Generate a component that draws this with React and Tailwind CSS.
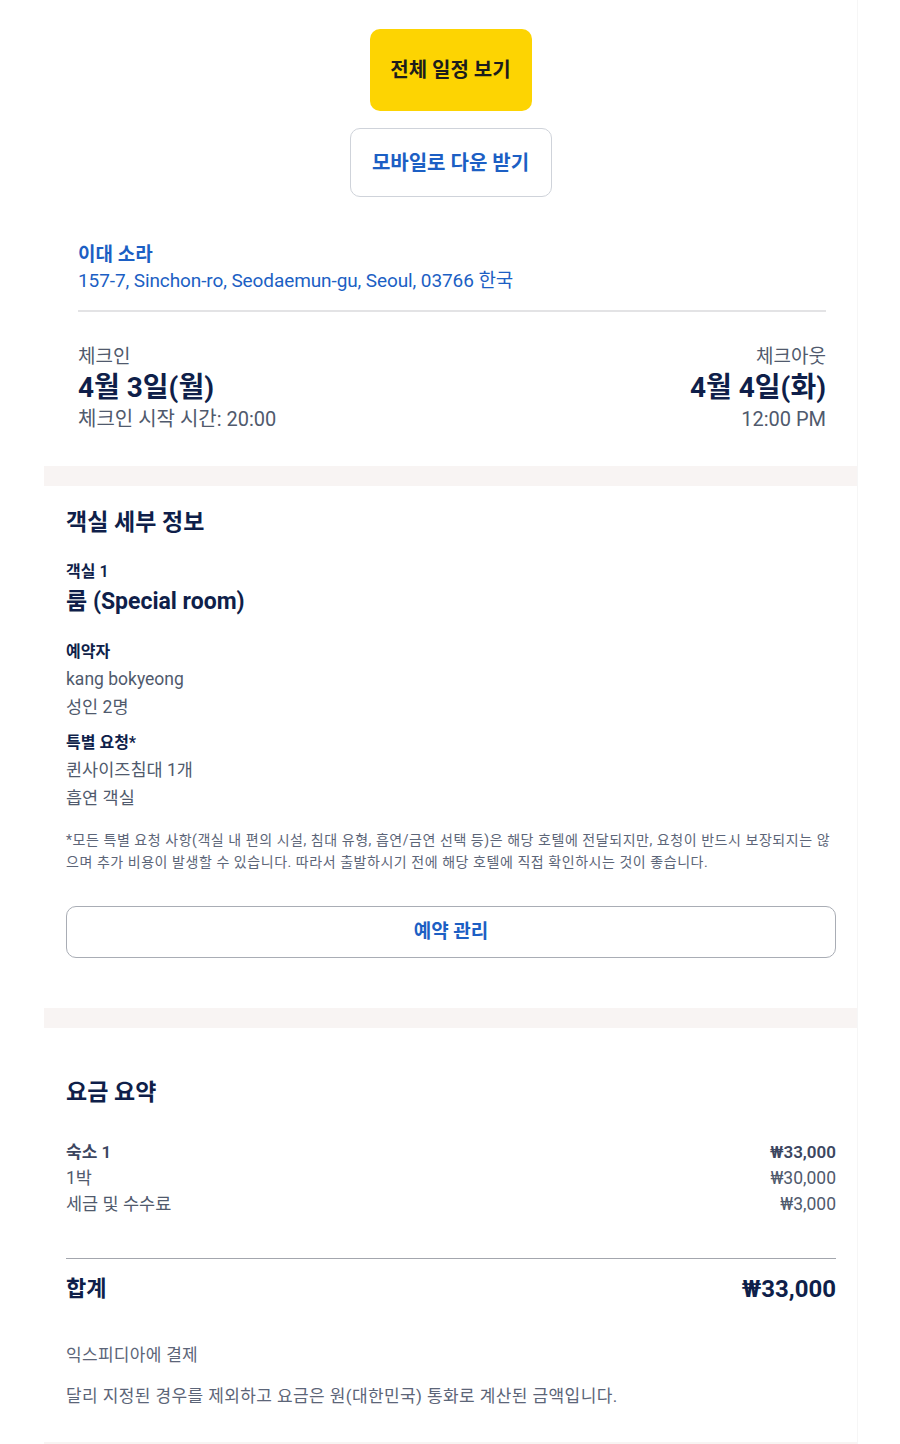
import React from "react";

const font = { fontFamily: 'Roboto, "Noto Sans CJK KR", sans-serif' };

export default function App() {
  return (
    <div className="w-[900px] min-h-[1444px] bg-white" style={font}>
      <div className="mx-[44px] w-[814px] border-r border-[#f6f6f6]">
        {/* Top section */}
        <div className="pt-[29px] pb-[34px]">
          <div className="flex flex-col items-center">
            <button className="w-[162px] h-[82px] rounded-[10px] bg-[#fdd402] text-[20px] font-bold text-[#1c1c1c]">
              전체 일정 보기
            </button>
            <button className="mt-[17px] w-[202px] h-[69px] rounded-[10px] border border-[#cfd3da] bg-white text-[20px] font-semibold text-[#1c5fc4]">
              모바일로 다운 받기
            </button>
          </div>
          <div className="pl-[34px] pr-[31px]">
            <div className="mt-[45px] text-[#1c5fc4]">
              <div className="text-[19px] leading-[26px] font-semibold">이대 소라</div>
              <div className="text-[19px] leading-[26px] tracking-[-0.1px]">157-7, Sinchon-ro, Seodaemun-gu, Seoul, 03766 한국</div>
            </div>
            <div className="mt-[16px] h-[2px] bg-[#e3e3e5]" />
            <div className="mt-[32px] flex justify-between">
              <div>
                <div className="text-[19px] leading-[26px] text-[#505a6d]">체크인</div>
                <div className="text-[28px] leading-[36px] font-bold text-[#0f1f4a]">4월 3일(월)</div>
                <div className="text-[20px] leading-[26px] text-[#505a6d]">체크인 시작 시간: 20:00</div>
              </div>
              <div className="text-right">
                <div className="text-[19px] leading-[26px] text-[#505a6d]">체크아웃</div>
                <div className="text-[28px] leading-[36px] font-bold text-[#0f1f4a]">4월 4일(화)</div>
                <div className="text-[20px] leading-[26px] text-[#505a6d]">12:00 PM</div>
              </div>
            </div>
          </div>
        </div>

        <div className="h-[20px] bg-[#f8f4f3]" />

        {/* Room details */}
        <div className="pl-[22px] pr-[21px] pt-[22px] pb-[50px]">
          <div className="text-[23px] leading-[30px] font-semibold text-[#0f1f4a]">객실 세부 정보</div>
          <div className="mt-[23px] text-[16px] leading-[22px] font-semibold text-[#0f1f4a]">객실 1</div>
          <div className="mt-[4px] text-[23px] leading-[30px] font-bold text-[#0f1f4a]">룸 (Special room)</div>
          <div className="mt-[24px] text-[16px] leading-[22px] font-bold text-[#0f1f4a]">예약자</div>
          <div className="mt-[2px] text-[17.5px] leading-[28px] text-[#505a6d]">kang bokyeong</div>
          <div className="text-[17.5px] leading-[28px] text-[#505a6d]">성인 2명</div>
          <div className="mt-[11px] text-[16px] leading-[22px] font-bold text-[#0f1f4a]">특별 요청*</div>
          <div className="mt-[2px] text-[17.5px] leading-[28px] text-[#505a6d]">퀸사이즈침대 1개</div>
          <div className="text-[17.5px] leading-[28px] text-[#505a6d]">흡연 객실</div>
          <p className="mt-[17px] text-[14px] leading-[22px] tracking-[0.55px] text-[#5c6578]">
            *모든 특별 요청 사항(객실 내 편의 시설, 침대 유형, 흡연/금연 선택 등)은 해당 호텔에 전달되지만, 요청이 반드시 보장되지는 않으며 추가 비용이 발생할 수 있습니다. 따라서 출발하시기 전에 해당 호텔에 직접 확인하시는 것이 좋습니다.
          </p>
          <button className="mt-[33px] w-full h-[52px] rounded-[10px] border border-[#a9adb5] bg-white text-[19px] font-bold text-[#1c5fc4]">
            예약 관리
          </button>
        </div>

        <div className="h-[20px] bg-[#f8f4f3]" />

        {/* Price summary */}
        <div className="pl-[22px] pr-[21px] pt-[50px] pb-[33px]">
          <div className="text-[23px] leading-[30px] font-semibold text-[#0f1f4a]">요금 요약</div>
          <div className="mt-[31px]">
            <div className="flex justify-between text-[17px] leading-[26px] font-semibold text-[#3c4660]">
              <span>숙소 1</span>
              <span>₩33,000</span>
            </div>
            <div className="flex justify-between text-[17.5px] leading-[26px] text-[#505a6d]">
              <span>1박</span>
              <span>₩30,000</span>
            </div>
            <div className="flex justify-between text-[17.5px] leading-[27px] text-[#505a6d]">
              <span>세금 및 수수료</span>
              <span>₩3,000</span>
            </div>
          </div>
          <div className="mt-[40px] h-px bg-[#a3a6ad]" />
          <div className="mt-[15px] flex items-center justify-between leading-[30px] font-bold text-[#0f1f4a]">
            <span className="text-[22px]">합계</span>
            <span className="text-[24px]">₩33,000</span>
          </div>
          <div className="mt-[38px] text-[17px] leading-[26px] tracking-[0.3px] text-[#5c6578]">익스피디아에 결제</div>
          <div className="mt-[15px] text-[17px] leading-[26px] tracking-[0.4px] text-[#5c6578]">
            달리 지정된 경우를 제외하고 요금은 원(대한민국) 통화로 계산된 금액입니다.
          </div>
        </div>

        <div className="h-[20px] bg-[#f8f4f3]" />
      </div>
    </div>
  );
}
